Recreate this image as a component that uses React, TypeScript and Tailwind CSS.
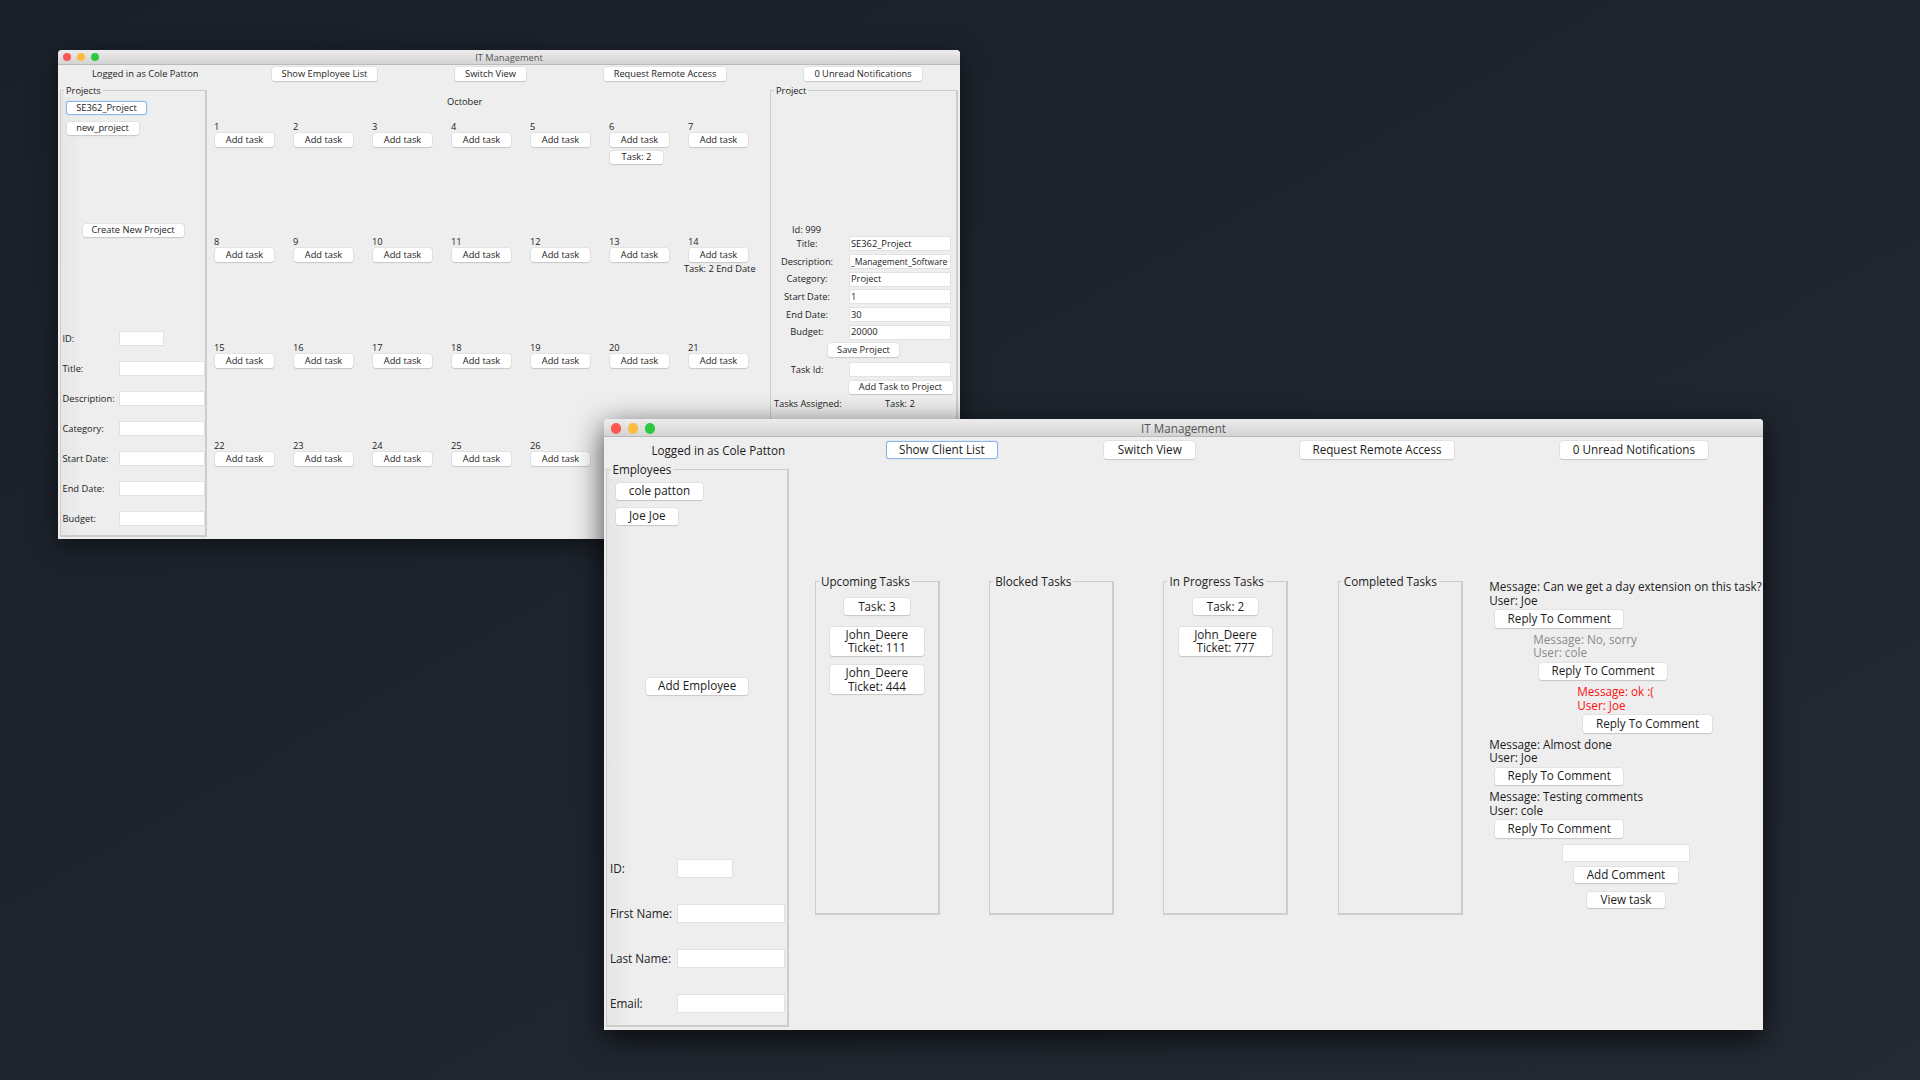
import type { ReactNode } from "react";

const btnBase =
  "flex shrink-0 items-center justify-center whitespace-nowrap rounded-[3px] bg-white text-[#1c1c1c] shadow-[0_0_0_0.5px_#d6d6d6,0_1px_1px_rgba(0,0,0,0.22)]";
const btnFocus =
  "flex shrink-0 items-center justify-center whitespace-nowrap rounded-[3px] bg-white text-[#1c1c1c] border border-[#8ab6ee] shadow-[0_0_1px_#8ab6ee]";
const inputBase =
  "block shrink-0 bg-white px-[1px] text-[#222] outline-none shadow-[0_0_0_1px_#e2e2e2]";

function Btn({ className, focus, children }: { className: string; focus?: boolean; children: ReactNode }) {
  return <button className={`${focus ? btnFocus : btnBase} ${className}`}>{children}</button>;
}

function TitleBar({ large }: { large?: boolean }) {
  return (
    <div
      className={
        large
          ? "relative flex h-[18px] items-center justify-center border-b border-[#b9b9b9] bg-linear-to-b from-[#ececec] to-[#d4d4d4] pt-[3px] text-[#555]"
          : "relative flex h-[14.5px] items-center justify-center border-b border-[#b9b9b9] bg-linear-to-b from-[#ececec] to-[#d4d4d4] pt-[3px] text-[#555]"
      }
    >
      <div className={large ? "absolute left-[6.7px] top-[4px] flex gap-[6.4px]" : "absolute left-[5.2px] top-[3.2px] flex gap-[5.4px]"}>
        <span className={large ? "h-[10.6px] w-[10.6px] rounded-full bg-[#fc5753]" : "h-[8.3px] w-[8.3px] rounded-full bg-[#fc5753]"} />
        <span className={large ? "h-[10.6px] w-[10.6px] rounded-full bg-[#fdbc40]" : "h-[8.3px] w-[8.3px] rounded-full bg-[#fdbc40]"} />
        <span className={large ? "h-[10.6px] w-[10.6px] rounded-full bg-[#2ec942]" : "h-[8.3px] w-[8.3px] rounded-full bg-[#2ec942]"} />
      </div>
      IT Management
    </div>
  );
}

function Group({ title, large, className, children }: { title: string; large?: boolean; className: string; children?: ReactNode }) {
  return (
    <div className={`relative shrink-0 border border-[#cdcdcd] border-r-2 border-b-2 ${className}`}>
      <span
        className={
          large
            ? "absolute left-[3px] top-[-0.65em] bg-[#eeeeee] px-[2px] leading-[1.3] text-[#222]"
            : "absolute left-[3px] top-[-0.7em] bg-[#eeeeee] px-[2px] leading-[1.3] text-[#222]"
        }
      >
        {title}
      </span>
      {children}
    </div>
  );
}

const calendarRows = [
  { h: "h-[115px]", days: [1, 2, 3, 4, 5, 6, 7] },
  { h: "h-[106px]", days: [8, 9, 10, 11, 12, 13, 14] },
  { h: "h-[98px]", days: [15, 16, 17, 18, 19, 20, 21] },
  { h: "h-[80px]", days: [22, 23, 24, 25, 26] },
];

function DayCell({ day, height }: { day: number; height: string }) {
  return (
    <div className={`flex flex-col items-start ${height}`}>
      <span className="-ml-px h-[12.3px] leading-[12.3px] text-[#222]">{day}</span>
      <Btn className="h-[14px] w-[59px]">Add task</Btn>
      {day === 6 && <Btn className="mt-[3.5px] h-[13px] w-[53px]">Task: 2</Btn>}
      {day === 14 && <span className="-ml-[5px] whitespace-nowrap leading-[13px] text-[#1c1c1c]">Task: 2 End Date</span>}
    </div>
  );
}

const leftFields = ["Title:", "Description:", "Category:", "Start Date:", "End Date:", "Budget:"];

const projectFields = [
  { label: "Title:", value: "SE362_Project", size: "" },
  { label: "Description:", value: "_Management_Software", size: "text-[8.6px]" },
  { label: "Category:", value: "Project", size: "" },
  { label: "Start Date:", value: "1", size: "" },
  { label: "End Date:", value: "30", size: "" },
  { label: "Budget:", value: "20000", size: "" },
];

function CalendarWindow() {
  return (
    <div className="absolute left-[58px] top-[50px] h-[489px] w-[902px] overflow-hidden rounded-t-[4px] bg-[#eeeeee] text-[9.3px] shadow-[0_6px_24px_rgba(0,0,0,0.5)]">
      <TitleBar />
      <div className="flex h-[18.5px] items-center text-[#1c1c1c]">
        <span className="ml-[34px] w-[106px] whitespace-nowrap">Logged in as Cole Patton</span>
        <Btn className="ml-[74px] h-[13.5px] w-[105px]">Show Employee List</Btn>
        <Btn className="ml-[78px] h-[13.5px] w-[71px]">Switch View</Btn>
        <Btn className="ml-[78px] h-[13.5px] w-[122px]">Request Remote Access</Btn>
        <Btn className="ml-[78px] h-[13.5px] w-[118px]">0 Unread Notifications</Btn>
      </div>
      <div className="flex pl-[2px]">
        <Group title="Projects" className="mt-[7px] flex h-[447px] w-[147px] flex-col bg-linear-to-r from-[#e6e6e6] to-[#eeeeee] to-[15%]">
          <Btn focus className="ml-[5px] mt-[10px] h-[14px] w-[81px]">SE362_Project</Btn>
          <Btn className="ml-[5.5px] mt-[6.5px] h-[13px] w-[72px]">new_project</Btn>
          <Btn className="mt-[89px] h-[13px] w-[101px] self-center">Create New Project</Btn>
          <div className="mt-[87px] flex flex-col pl-[1.5px] text-[#222]">
            <label className="flex h-[30px] items-center">
              <span className="w-[57px]">ID:</span>
              <input readOnly className={`${inputBase} h-[13px] w-[43px]`} />
            </label>
            {leftFields.map((f) => (
              <label key={f} className="flex h-[30px] items-center">
                <span className="w-[57px] whitespace-nowrap">{f}</span>
                <input readOnly className={`${inputBase} h-[13px] w-[84px]`} />
              </label>
            ))}
          </div>
        </Group>
        <div className="w-[563px] shrink-0">
          <div className="flex h-[38px] items-center pl-[240px] text-[#222]">October</div>
          <div className="pl-[8px]">
            {calendarRows.map((r) => (
              <div key={r.days[0]} className="grid grid-cols-[repeat(7,79px)]">
                {r.days.map((d) => (
                  <DayCell key={d} day={d} height={r.h} />
                ))}
              </div>
            ))}
          </div>
        </div>
        <Group title="Project" className="mt-[7px] h-[447px] w-[188px] pt-[133px] text-[#222]">
          <div className="flex h-[11px] items-center pl-[21px]">Id: 999</div>
          {projectFields.map((f) => (
            <div key={f.label} className="flex h-[17.7px] items-center">
              <span className="w-[79px] whitespace-nowrap pr-[7px] text-center">{f.label}</span>
              <input readOnly value={f.value} className={`${inputBase} h-[13px] w-[100px] ${f.size}`} />
            </div>
          ))}
          <div className="flex h-[17.7px] items-center justify-center">
            <Btn className="h-[13.5px] w-[71.6px]">Save Project</Btn>
          </div>
          <div className="mt-[2px] flex h-[17.7px] items-center">
            <span className="w-[79px] pr-[7px] text-center">Task Id:</span>
            <input readOnly className={`${inputBase} h-[13px] w-[100px]`} />
          </div>
          <div className="flex h-[17.7px] items-center pl-[77.5px]">
            <Btn className="h-[13.5px] w-[104px]">Add Task to Project</Btn>
          </div>
          <div className="flex h-[15.7px] items-center pl-[3px]">
            <span className="w-[111px] whitespace-nowrap">Tasks Assigned:</span>
            <span className="whitespace-nowrap">Task: 2</span>
          </div>
        </Group>
      </div>
    </div>
  );
}

const comments = [
  { indent: "", btn: "ml-[5.7px]", text: "text-[#1c1c1c]", message: "Can we get a day extension on this task?", user: "Joe" },
  { indent: "ml-[44px]", btn: "ml-[49.5px]", text: "text-[#8a8a8a]", message: "No, sorry", user: "cole" },
  { indent: "ml-[88px]", btn: "ml-[94px]", text: "text-[#ff0f0f]", message: "ok :(", user: "Joe" },
  { indent: "", btn: "ml-[5.7px]", text: "text-[#1c1c1c]", message: "Almost done", user: "Joe" },
  { indent: "", btn: "ml-[5.7px]", text: "text-[#1c1c1c]", message: "Testing comments", user: "cole" },
];

function TaskGroup({ title, children }: { title: string; children?: ReactNode }) {
  return (
    <Group large title={title} className="flex h-[334px] w-[125px] flex-col items-center">
      {children}
    </Group>
  );
}

const ticketBtn = "h-[29px] w-[93.5px] text-center leading-[13.5px]";

function EmployeeWindow() {
  return (
    <div className="absolute left-[604px] top-[419px] h-[611px] w-[1159px] overflow-hidden rounded-t-[4px] bg-[#eeeeee] text-[11.7px] shadow-[0_8px_30px_rgba(0,0,0,0.75)]">
      <TitleBar large />
      <div className="flex h-[22px] items-start pt-[4px] text-[#1c1c1c]">
        <span className="ml-[47.4px] mt-[1px] w-[134px] whitespace-nowrap">Logged in as Cole Patton</span>
        <Btn focus className="ml-[100.3px] h-[17.6px] w-[112.3px]">Show Client List</Btn>
        <Btn className="ml-[106.5px] h-[17.6px] w-[90.5px]">Switch View</Btn>
        <Btn className="ml-[105px] h-[17.6px] w-[154px]">Request Remote Access</Btn>
        <Btn className="ml-[106px] h-[17.6px] w-[148px]">0 Unread Notifications</Btn>
      </div>
      <div className="flex pl-[2.4px] pt-[10px]">
        <Group large title="Employees" className="flex h-[558px] w-[182.5px] flex-col bg-linear-to-r from-[#e6e6e6] to-[#eeeeee] to-[15%]">
          <Btn className="ml-[8.6px] mt-[13px] h-[16.5px] w-[87px]">cole patton</Btn>
          <Btn className="ml-[8.6px] mt-[8px] h-[17px] w-[62.5px]">Joe Joe</Btn>
          <Btn className="mt-[153px] h-[17.5px] w-[102px] self-center">Add Employee</Btn>
          <div className="mt-[151px] flex flex-col pl-[2.5px] text-[#222]">
            {["ID:", "First Name:", "Last Name:", "Email:"].map((f, i) => (
              <label key={f} className="flex h-[45px] items-center">
                <span className="w-[68px] whitespace-nowrap">{f}</span>
                <input readOnly className={`${inputBase} h-[16.5px] ${i === 0 ? "w-[54px]" : "w-[106px]"}`} />
              </label>
            ))}
          </div>
        </Group>
        <div className="ml-[26px] mt-[112px] flex gap-[49.3px]">
          <TaskGroup title="Upcoming Tasks">
            <Btn className="mt-[16px] h-[17px] w-[66px]">Task: 3</Btn>
            <Btn className={`mt-[11.7px] ${ticketBtn}`}>John_Deere<br />Ticket: 111</Btn>
            <Btn className={`mt-[9.5px] ${ticketBtn}`}>John_Deere<br />Ticket: 444</Btn>
          </TaskGroup>
          <TaskGroup title="Blocked Tasks" />
          <TaskGroup title="In Progress Tasks">
            <Btn className="mt-[16px] h-[17px] w-[65.5px]">Task: 2</Btn>
            <Btn className={`mt-[11.7px] ${ticketBtn}`}>John_Deere<br />Ticket: 777</Btn>
          </TaskGroup>
          <TaskGroup title="Completed Tasks" />
        </div>
        <div className="ml-[26.5px] mt-[111px] flex w-[273px] shrink-0 flex-col">
          {comments.map((c) => (
            <div key={c.message} className="mb-[5px] flex flex-col">
              <div className={`${c.indent} ${c.text} whitespace-nowrap leading-[13.5px]`}>
                <div>Message: {c.message}</div>
                <div>User: {c.user}</div>
              </div>
              <Btn className={`${c.btn} mt-[3px] h-[17.5px] w-[128.5px]`}>Reply To Comment</Btn>
            </div>
          ))}
          <div className="ml-[73.7px] mt-[2px] flex w-[126px] flex-col items-center">
            <input readOnly className={`${inputBase} h-[16.3px] w-[126px]`} />
            <Btn className="mt-[6px] h-[16.6px] w-[103.6px]">Add Comment</Btn>
            <Btn className="mt-[8.4px] h-[16.6px] w-[77.6px]">View task</Btn>
          </div>
        </div>
      </div>
    </div>
  );
}

export default function App() {
  return (
    <div className="relative h-screen w-screen overflow-hidden bg-linear-to-br from-[#1a2029] to-[#232a33] font-['Open_Sans',sans-serif]">
      <CalendarWindow />
      <EmployeeWindow />
    </div>
  );
}
